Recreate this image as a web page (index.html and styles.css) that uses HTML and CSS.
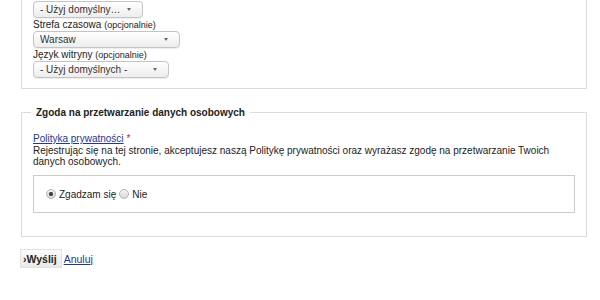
FILE: index.html
```html
<!DOCTYPE html>
<html lang="pl">
<head>
    <meta charset="UTF-8">
    <title>Rejestracja</title>
    <link rel="stylesheet" href="styles.css">
</head>
<body>
    <form class="signup">
        <fieldset class="box box-settings">
            <div class="field">
                <span class="sel-wrap">
                    <select class="sel sel-short">
                        <option>- Użyj domyślny…</option>
                    </select>
                </span>
            </div>
            <div class="field">
                <label class="lbl">Strefa czasowa <small>(opcjonalnie)</small></label>
                <span class="sel-wrap">
                    <select class="sel sel-tz">
                        <option>Warsaw</option>
                    </select>
                </span>
            </div>
            <div class="field">
                <label class="lbl">Język witryny <small>(opcjonalnie)</small></label>
                <span class="sel-wrap">
                    <select class="sel sel-lang">
                        <option>- Użyj domyślnych -</option>
                    </select>
                </span>
            </div>
        </fieldset>

        <fieldset class="box box-consent">
            <legend>Zgoda na przetwarzanie danych osobowych</legend>
            <div class="policy">
                <a href="#">Polityka prywatności</a> <span class="req">*</span>
            </div>
            <p class="policy-text">Rejestrując się na tej stronie, akceptujesz naszą Politykę prywatności oraz wyrażasz zgodę na przetwarzanie Twoich danych osobowych.</p>
            <div class="choice">
                <label><input type="radio" name="agree" checked>Zgadzam się</label>
                <label><input type="radio" name="agree">Nie</label>
            </div>
        </fieldset>

        <div class="actions">
            <button type="button" class="btn">›Wyślij</button>
            <a href="#">Anuluj</a>
        </div>
    </form>
</body>
</html>
```

FILE: styles.css
```css
body {
    margin: 0;
    font-family: "Liberation Sans", Arial, sans-serif;
    font-size: 10px;
    color: #222;
    background: #fff;
}

.signup {
    width: 566px;
    margin-left: 21px;
}

.box {
    margin: 0;
    border: 1px solid #dcdcdc;
    padding: 0 11px;
}

.box-settings {
    margin-top: -20px;
    padding-top: 20px;
    padding-bottom: 10px;
}

.field {
    display: flex;
    flex-direction: column;
    align-items: flex-start;
}

.lbl {
    line-height: 12px;
    margin-top: 1px;
}

.lbl small {
    font-size: 9px;
}

.sel-wrap {
    position: relative;
    display: inline-block;
}

.sel-wrap::after {
    content: "";
    position: absolute;
    right: 12px;
    top: 7px;
    border-left: 2.5px solid transparent;
    border-right: 2.5px solid transparent;
    border-top: 3px solid #666;
    pointer-events: none;
}

.sel {
    -webkit-appearance: none;
    appearance: none;
    display: block;
    height: 17px;
    font-family: "Liberation Sans", Arial, sans-serif;
    font-size: 10px;
    color: #333;
    border: 1px solid #c4c4c4;
    border-radius: 4px;
    background: linear-gradient(#fff, #ededed);
    padding: 0 6px;
    box-shadow: 0 1px 0 #eee;
}

.sel-short { width: 110px; }
.sel-tz { width: 147px; }
.sel-lang { width: 136px; }

.box-consent {
    margin-top: 18px;
    padding-top: 15px;
    padding-bottom: 23px;
}

.box-consent legend {
    font-weight: bold;
    font-size: 10px;
    padding: 0 5px;
    margin-left: -2px;
}

.policy {
    line-height: 12px;
}

.policy a, .actions a {
    color: #23398f;
}

.req {
    color: #d22;
}

.policy-text {
    margin: 0 0 8px;
    line-height: 11px;
}

.choice {
    border: 1px solid #ccc;
    height: 36px;
    display: flex;
    align-items: center;
    padding-left: 12px;
    gap: 3px;
}

.choice label {
    display: flex;
    align-items: center;
}

.choice input {
    -webkit-appearance: none;
    appearance: none;
    margin: 0 3px 0 0;
    width: 10px;
    height: 10px;
    border: 1px solid #b5b5b5;
    border-radius: 50%;
    background: linear-gradient(#f4f4f4, #d8d8d8);
}

.choice input:checked {
    background: radial-gradient(circle, #444 0 1.8px, transparent 2.4px), linear-gradient(#f4f4f4, #d8d8d8);
}

.actions {
    margin-top: 12px;
    margin-left: -1px;
    display: flex;
    align-items: center;
    gap: 2px;
    font-size: 10.5px;
}

.btn {
    height: 19px;
    padding: 0 4px 0 2px;
    font-family: "Liberation Sans", Arial, sans-serif;
    font-size: 10.5px;
    font-weight: bold;
    color: #222;
    border: 1px solid #e2e2e2;
    background: linear-gradient(#fbfbfb, #e9e9e9);
}
```
